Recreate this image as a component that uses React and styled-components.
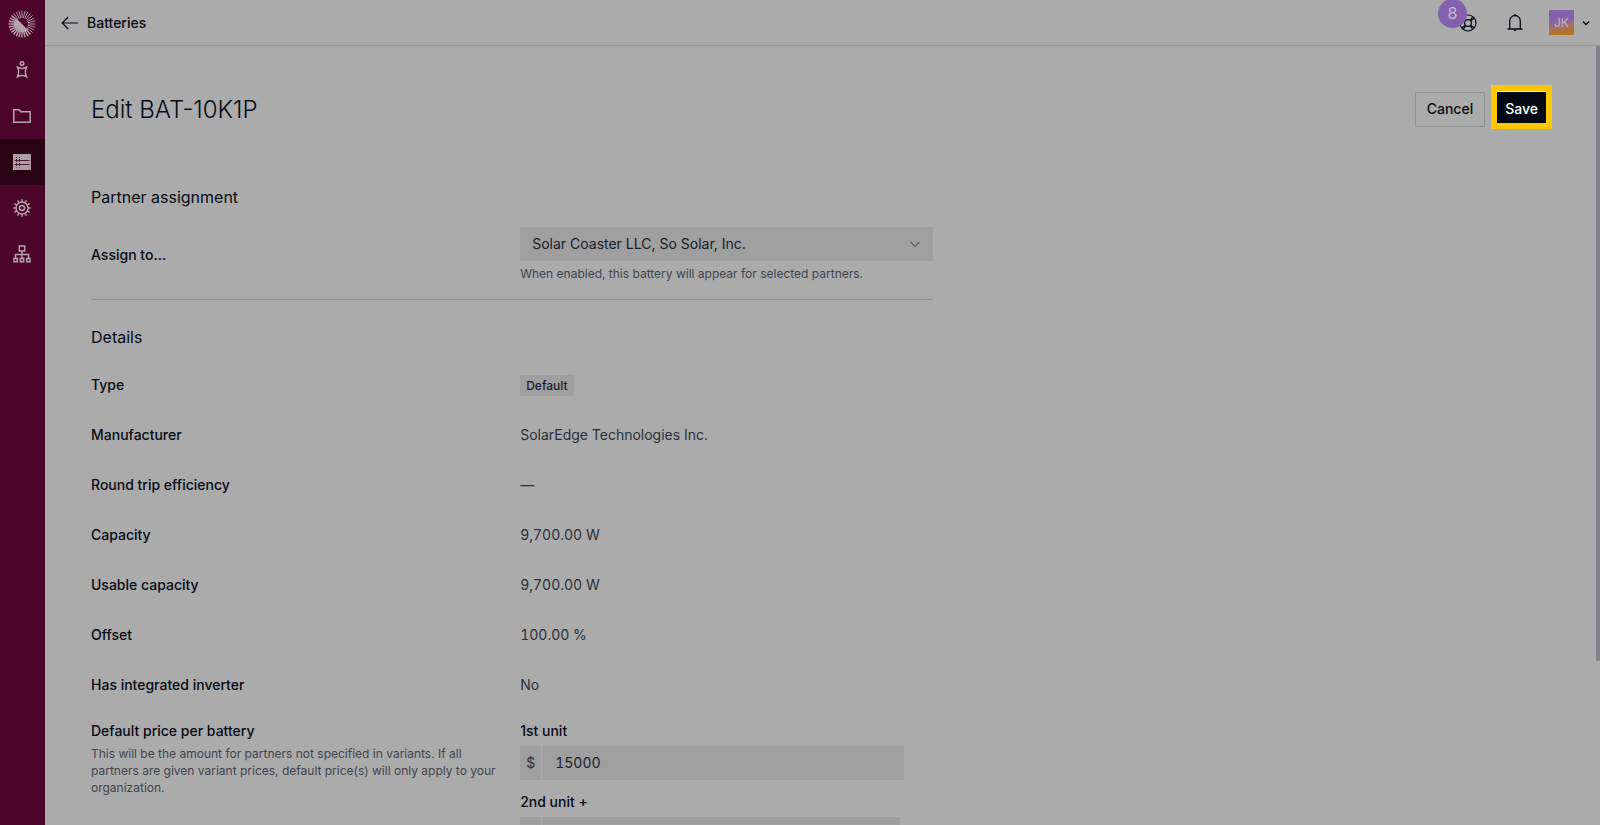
import React from "react";
import styled, { createGlobalStyle } from "styled-components";

const Global = createGlobalStyle`
  *, *::before, *::after { box-sizing: border-box; }
  html, body, #root { height: 100%; }
  body {
    margin: 0;
    background: #ababab;
    color: #060b16;
    font: 14px/20px Inter, "Liberation Sans", sans-serif;
  }
  button, input, select { font: inherit; color: inherit; }
`;

const Shell = styled.div`
  display: flex;
  height: 100vh;
  overflow: hidden;
`;

const Sidebar = styled.nav`
  flex: none;
  width: 45px;
  display: flex;
  flex-direction: column;
  background: #4d042b;
  color: #b5a3ac;
`;

const NavLink = styled.a`
  display: flex;
  align-items: center;
  justify-content: center;
  height: 46px;
  padding-right: 1px;
  color: inherit;
  background: ${(p) => (p.$active ? "#290214" : "transparent")};
`;

const HomeLink = styled(NavLink)`
  height: 47px;
`;

const Main = styled.div`
  flex: 1;
  min-width: 0;
  display: flex;
  flex-direction: column;
`;

const TopBar = styled.header`
  flex: none;
  display: flex;
  align-items: center;
  justify-content: space-between;
  height: 46px;
  padding: 0 10px 0 16px;
  border-bottom: 1px solid #969799;
`;

const BackLink = styled.a`
  display: flex;
  align-items: center;
  gap: 9px;
  color: inherit;
  font-weight: 500;
  text-decoration: none;
`;

const Tools = styled.div`
  display: flex;
  align-items: center;
`;

const IconButton = styled.button`
  position: relative;
  display: flex;
  margin-right: ${(p) => p.$gap}px;
  padding: 0;
  border: 0;
  background: none;
`;

const Count = styled.span`
  position: absolute;
  right: 10px;
  bottom: 4px;
  width: 29px;
  height: 29px;
  border-radius: 50%;
  background: #8560ad;
  color: #c4b6d2;
  font-size: 16px;
  line-height: 29px;
  text-align: center;
`;

const Account = styled.button`
  display: flex;
  align-items: center;
  gap: 8px;
  padding: 0;
  border: 0;
  background: none;
`;

const Avatar = styled.span`
  width: 25px;
  height: 25px;
  background: linear-gradient(170deg, #8560ad 40%, #a0706f 62%, #b5731f 85%);
  color: #b9acbc;
  font-size: 12px;
  font-weight: 500;
  line-height: 25px;
  text-align: center;
`;

const Body = styled.div`
  flex: 1;
  min-height: 0;
  display: flex;
`;

const Content = styled.main`
  flex: 1;
  min-width: 0;
  overflow-y: auto;
  scrollbar-width: none;
  padding: 39px 44px 0 46px;
`;

const ScrollTrack = styled.div`
  flex: none;
  width: 4px;
`;

const ScrollThumb = styled.div`
  height: 79%;
  background: #808488;
`;

const TitleRow = styled.div`
  display: flex;
  align-items: center;
  justify-content: space-between;
  height: 50px;
`;

const Title = styled.h1`
  margin: 0;
  font-size: 24px;
  font-weight: 300;
  line-height: 32px;
`;

const Actions = styled.div`
  display: flex;
  align-items: flex-start;
  align-self: flex-start;
  gap: 6px;
`;

const CancelButton = styled.button`
  height: 35px;
  margin-top: 7px;
  padding: 0 11px 1px;
  border: 1px solid #939496;
  background: transparent;
  font-weight: 500;
`;

const Highlight = styled.div`
  padding: 6px;
  background: #ffc700;
`;

const SaveButton = styled.button`
  display: block;
  height: 32px;
  padding: 2px 8px 0;
  border: 0;
  border-top: 1px solid #fff3c4;
  background: #020814;
  color: #fff;
  font-weight: 500;
`;

const Form = styled.form`
  width: 57.6%;
  margin-top: 48px;
`;

const Section = styled.section`
  padding-bottom: ${(p) => (p.$divided ? "17px" : "0")};
  margin-bottom: ${(p) => (p.$divided ? "23px" : "0")};
  border-bottom: ${(p) => (p.$divided ? "1px solid #919294" : "0")};
`;

const SectionTitle = styled.h2`
  margin: 0;
  font-size: 16px;
  font-weight: 400;
  line-height: 28px;
`;

const Row = styled.div`
  display: grid;
  grid-template-columns: 51fr 49fr;
  align-items: center;
`;

const AssignRow = styled(Row)`
  margin-top: 16px;
`;

const PriceRow = styled(Row)`
  align-items: start;
  margin-top: 11px;
  padding-bottom: 48px;
`;

const Facts = styled.dl`
  margin: 9px 0 0;
`;

const Fact = styled(Row)`
  min-height: 50px;
`;

const Term = styled.dt`
  font-weight: 500;
`;

const Value = styled.dd`
  margin: 0;
  color: #2a303b;
  font-variant-numeric: tabular-nums;
`;

const Label = styled.label`
  display: block;
  font-weight: 500;
`;

const Hint = styled.p`
  margin: 0;
  color: #3f4550;
  font-size: 12px;
  line-height: 17px;
`;

const PriceHint = styled(Hint)`
  margin-top: 4px;
  padding-right: 24px;
`;

const SelectBox = styled.div`
  position: relative;
  margin-bottom: 4px;
`;

const Select = styled.select`
  display: block;
  width: 100%;
  height: 34px;
  padding: 0 12px;
  border: 0;
  border-radius: 0;
  appearance: none;
  background: #9f9f9f;
  color: #1a202c;
`;

const SelectArrow = styled.svg`
  position: absolute;
  right: 12px;
  top: 11px;
  pointer-events: none;
`;

const Tag = styled.span`
  display: block;
  width: fit-content;
  padding: 0 6px;
  background: #9f9f9f;
  color: #1a202c;
  font-size: 12px;
  font-weight: 500;
  line-height: 21px;
`;

const Prices = styled.div`
  display: grid;
  gap: 12px;
`;

const MoneyBox = styled.div`
  display: flex;
  gap: 1px;
  width: ${(p) => p.$width};
  height: 34px;
  margin-top: 5px;
`;

const Currency = styled.span`
  flex: none;
  display: flex;
  align-items: center;
  justify-content: center;
  width: 21px;
  background: #9f9f9f;
  color: #2a303b;
`;

const MoneyInput = styled.input`
  flex: 1;
  min-width: 0;
  padding: 0 13px;
  border: 0;
  border-radius: 0;
  background: #9f9f9f;
  color: #1a202c;
  font-variant-numeric: tabular-nums;
`;

const rays = Array.from({ length: 28 }, (_, i) => (i * 2 * Math.PI) / 28);

function Logo() {
  return (
    <svg width="28" height="28" viewBox="-14 -14 28 28" stroke="currentColor">
      {rays.map((a) => {
        const lit = Math.sin(a) - Math.cos(a) > -0.1;
        return (
          <line
            key={a}
            x1={Math.cos(a) * 6}
            y1={Math.sin(a) * 6}
            x2={Math.cos(a) * 13.5}
            y2={Math.sin(a) * 13.5}
            strokeWidth={lit ? 1.4 : 0.9}
          />
        );
      })}
      <path d="M-5.8-5.800A8.200 8.200 0 1 0 5.800 5.800Z" fill="currentColor" stroke="none" />
    </svg>
  );
}

const line = { fill: "none", stroke: "currentColor", strokeWidth: 1.5 };

const PersonIcon = () => (
  <svg width="18" height="18" viewBox="0 0 18 18" {...line}>
    <circle cx="9" cy="2.500" r="1.8" />
    <path d="M4.500 6.300C7 7.500 11 7.500 13.500 6.300C12 9.500 12 12.500 13.500 15.700C11 14.500 7 14.500 4.500 15.700C6 12.500 6 9.500 4.500 6.300Z" />
  </svg>
);

const FolderIcon = () => (
  <svg width="18" height="16" viewBox="0 0 18 16" {...line}>
    <path d="M.8 14.200V1.800h5.400l1.600 2h9.400v10.400Z" />
  </svg>
);

const ListIcon = () => (
  <svg width="18" height="16" viewBox="0 0 18 16">
    <path fill="#ad9ea5" d="M0 0h18v16H0z" />
    <path stroke="#4d1c33" d="M1.500 6.500h15M1.500 10.500h15" />
    <path stroke="#4d1c33" strokeDasharray="1 1" d="M3.500 3v10.500M6.500 3v10.500" />
  </svg>
);

const teeth = Array.from({ length: 12 }, (_, i) => i * 30);

const GearIcon = () => (
  <svg width="18" height="18" viewBox="-9 -9 18 18" {...line}>
    <circle r="6" />
    <circle r="2.500" />
    {teeth.map((d) => (
      <path key={d} d="M0-6.300V-8.800" transform={`rotate(${d})`} />
    ))}
  </svg>
);

const TreeIcon = () => (
  <svg width="18" height="18" viewBox="0 0 18 18" {...line}>
    <path d="M6.300 1h5.400v5H6.300zM9 6v7M2.500 13V9.500h13V13M1 13.500h3.300v3.300H1zM7.300 13.500h3.400v3.300H7.300zM13.700 13.500H17v3.300h-3.300z" />
  </svg>
);

const ArrowIcon = () => (
  <svg width="17" height="14" viewBox="0 0 17 14" fill="none" stroke="currentColor" strokeWidth="1.2">
    <path d="M17 7H1.500M7.200 1 1.200 7l6 6" />
  </svg>
);

const HelpIcon = () => (
  <svg width="18" height="18" viewBox="0 0 18 18" fill="none" stroke="currentColor" strokeWidth="1.2">
    <circle cx="9" cy="9" r="8" />
    <circle cx="9" cy="9" r="3.400" />
    <path d="m2.700 4.300 3.800 2.500M4.300 2.700l2.500 3.800M15.300 4.300l-3.800 2.500M13.700 2.700l-2.500 3.800M2.700 13.700l3.800-2.500M4.300 15.300l2.500-3.800M15.300 13.700l-3.800-2.500M13.700 15.300l-2.500-3.800" />
  </svg>
);

const BellIcon = () => (
  <svg width="16" height="18" viewBox="0 0 16 18" fill="none" stroke="currentColor" strokeWidth="1.300">
    <path d="M.5 15h15M2.700 15V7a5.300 5.500 0 0 1 10.600 0v8M8 0v1.500" />
    <path d="M6.300 15.500h3.400L8 17.500Z" fill="currentColor" stroke="none" />
  </svg>
);

const NAV = [
  ["Leads", PersonIcon],
  ["Projects", FolderIcon],
  ["Database", ListIcon],
  ["Settings", GearIcon],
  ["Organization", TreeIcon],
];

const FACTS = [
  ["Type", <Tag>Default</Tag>],
  ["Manufacturer", "SolarEdge Technologies Inc."],
  ["Round trip efficiency", "—"],
  ["Capacity", "9,700.00 W"],
  ["Usable capacity", "9,700.00 W"],
  ["Offset", "100.00 %"],
  ["Has integrated inverter", "No"],
];

function PriceField({ id, label, value, width }) {
  return (
    <div>
      <Label htmlFor={id}>{label}</Label>
      <MoneyBox $width={width}>
        <Currency>$</Currency>
        <MoneyInput id={id} defaultValue={value} inputMode="decimal" />
      </MoneyBox>
    </div>
  );
}

export default function App() {
  return (
    <>
      <Global />
      <Shell>
        <Sidebar>
          <HomeLink href="#home" aria-label="Home">
            <Logo />
          </HomeLink>
          {NAV.map(([name, Icon]) => (
            <NavLink key={name} href={`#${name}`} aria-label={name} $active={name === "Database"}>
              <Icon />
            </NavLink>
          ))}
        </Sidebar>
        <Main>
          <TopBar>
            <BackLink href="#batteries">
              <ArrowIcon />
              Batteries
            </BackLink>
            <Tools>
              <IconButton aria-label="Help" $gap={30}>
                <HelpIcon />
                <Count>8</Count>
              </IconButton>
              <IconButton aria-label="Notifications" $gap={26}>
                <BellIcon />
              </IconButton>
              <Account aria-label="Account">
                <Avatar>JK</Avatar>
                <svg width="8" height="6" viewBox="0 0 8 6" fill="none" stroke="currentColor" strokeWidth="1.300">
                  <path d="m1 1.500 3 3 3-3" />
                </svg>
              </Account>
            </Tools>
          </TopBar>
          <Body>
            <Content>
              <TitleRow>
                <Title>Edit BAT-10K1P</Title>
                <Actions>
                  <CancelButton type="button">Cancel</CancelButton>
                  <Highlight>
                    <SaveButton type="submit" form="battery">Save</SaveButton>
                  </Highlight>
                </Actions>
              </TitleRow>
              <Form id="battery">
                <Section $divided>
                  <SectionTitle>Partner assignment</SectionTitle>
                  <AssignRow>
                    <Label htmlFor="assign">Assign to...</Label>
                    <div>
                      <SelectBox>
                        <Select id="assign">
                          <option>Solar Coaster LLC, So Solar, Inc.</option>
                        </Select>
                        <SelectArrow width="12" height="12" viewBox="0 0 12 12" fill="none" stroke="#2a303b">
                          <path d="m1.500 4 4.500 4.500L10.500 4" />
                        </SelectArrow>
                      </SelectBox>
                      <Hint>When enabled, this battery will appear for selected partners.</Hint>
                    </div>
                  </AssignRow>
                </Section>
                <Section>
                  <SectionTitle>Details</SectionTitle>
                  <Facts>
                    {FACTS.map(([term, value]) => (
                      <Fact key={term}>
                        <Term>{term}</Term>
                        <Value>{value}</Value>
                      </Fact>
                    ))}
                  </Facts>
                  <PriceRow>
                    <div>
                      <Label as="div">Default price per battery</Label>
                      <PriceHint>
                        This will be the amount for partners not specified in variants. If all partners
                        are given variant prices, default price(s) will only apply to your organization.
                      </PriceHint>
                    </div>
                    <Prices>
                      <PriceField id="unit1" label="1st unit" value="15000" width="93%" />
                      <PriceField id="unit2" label="2nd unit +" value="" width="92%" />
                    </Prices>
                  </PriceRow>
                </Section>
              </Form>
            </Content>
            <ScrollTrack>
              <ScrollThumb />
            </ScrollTrack>
          </Body>
        </Main>
      </Shell>
    </>
  );
}
